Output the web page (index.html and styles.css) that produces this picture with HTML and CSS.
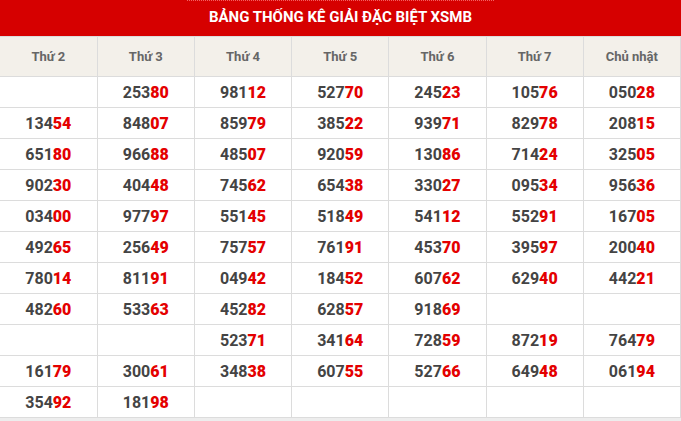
FILE: index.html
```html
<!DOCTYPE html>
<html lang="vi">
<head>
<meta charset="utf-8">
<title>Bảng thống kê giải đặc biệt XSMB</title>
<link rel="stylesheet" href="styles.css">
</head>
<body>
<div class="board">
  <h2 class="title"><span class="title-link">BẢNG THỐNG KÊ GIẢI ĐẶC BIỆT XSMB</span></h2>
  <table class="stats">
    <thead>
      <tr><th>Thứ 2</th><th>Thứ 3</th><th>Thứ 4</th><th>Thứ 5</th><th>Thứ 6</th><th>Thứ 7</th><th>Chủ nhật</th></tr>
    </thead>
    <tbody>
      <tr><td></td><td>253<b>80</b></td><td>981<b>12</b></td><td>527<b>70</b></td><td>245<b>23</b></td><td>105<b>76</b></td><td>050<b>28</b></td></tr>
      <tr><td>134<b>54</b></td><td>848<b>07</b></td><td>859<b>79</b></td><td>385<b>22</b></td><td>939<b>71</b></td><td>829<b>78</b></td><td>208<b>15</b></td></tr>
      <tr><td>651<b>80</b></td><td>966<b>88</b></td><td>485<b>07</b></td><td>920<b>59</b></td><td>130<b>86</b></td><td>714<b>24</b></td><td>325<b>05</b></td></tr>
      <tr><td>902<b>30</b></td><td>404<b>48</b></td><td>745<b>62</b></td><td>654<b>38</b></td><td>330<b>27</b></td><td>095<b>34</b></td><td>956<b>36</b></td></tr>
      <tr><td>034<b>00</b></td><td>977<b>97</b></td><td>551<b>45</b></td><td>518<b>49</b></td><td>541<b>12</b></td><td>552<b>91</b></td><td>167<b>05</b></td></tr>
      <tr><td>492<b>65</b></td><td>256<b>49</b></td><td>757<b>57</b></td><td>761<b>91</b></td><td>453<b>70</b></td><td>395<b>97</b></td><td>200<b>40</b></td></tr>
      <tr><td>780<b>14</b></td><td>811<b>91</b></td><td>049<b>42</b></td><td>184<b>52</b></td><td>607<b>62</b></td><td>629<b>40</b></td><td>442<b>21</b></td></tr>
      <tr><td>482<b>60</b></td><td>533<b>63</b></td><td>452<b>82</b></td><td>628<b>57</b></td><td>918<b>69</b></td><td></td><td></td></tr>
      <tr><td></td><td></td><td>523<b>71</b></td><td>341<b>64</b></td><td>728<b>59</b></td><td>872<b>19</b></td><td>764<b>79</b></td></tr>
      <tr><td>161<b>79</b></td><td>300<b>61</b></td><td>348<b>38</b></td><td>607<b>55</b></td><td>527<b>66</b></td><td>649<b>48</b></td><td>061<b>94</b></td></tr>
      <tr><td>354<b>92</b></td><td>181<b>98</b></td><td></td><td></td><td></td><td></td><td></td></tr>
    </tbody>
  </table>
</div>
</body>
</html>
```
FILE: styles.css
```css
html, body {
  margin: 0;
  padding: 0;
}
body {
  background: #ededed;
  font-family: Roboto, "Liberation Sans", Arial, sans-serif;
  width: 681px;
}
.board {
  background: #fff;
}
.title {
  margin: 0;
  height: 36px;
  background: #d60000;
  color: #fff;
  font-size: 15px;
  font-weight: 700;
  text-align: center;
  line-height: 34px;
}
.title-link {
  display: inline-block;
  padding: 0 22px;
  line-height: 33px;
  border-top: 1px dotted rgba(255, 140, 140, 0.7);
}
.stats {
  width: 681px;
  border-collapse: collapse;
  table-layout: fixed;
}
.stats th, .stats td {
  border: 1px solid #dcdcdc;
  text-align: center;
  padding: 0;
}
.stats th {
  height: 39px;
  background: #f3f0ea;
  color: #666;
  font-size: 13px;
  font-weight: 700;
}
.stats td {
  height: 30px;
  color: #444;
  font-size: 16px;
  font-weight: 700;
}
.stats td b {
  color: #e40000;
}
.stats tr > :first-child {
  border-left: 0;
}
```
